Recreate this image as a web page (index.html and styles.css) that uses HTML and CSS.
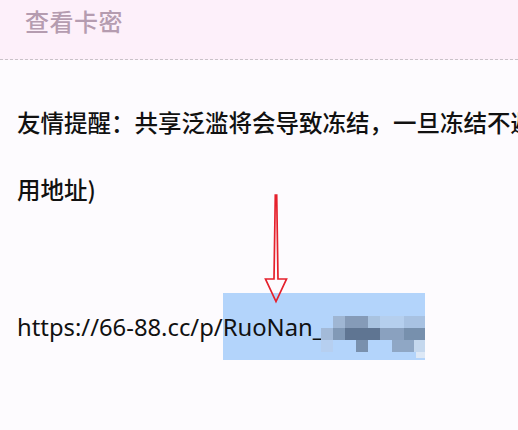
FILE: index.html
```html
<!DOCTYPE html>
<html lang="zh">
<head>
<meta charset="utf-8">
<link rel="stylesheet" href="styles.css">
</head>
<body>
<div class="page">
  <header class="header">
    <h1 class="title">查看卡密</h1>
  </header>
  <main class="content">
    <p class="notice">友情提醒：共享泛滥将会导致冻结，一旦冻结不避免</p>
    <p class="notice notice-end">用地址)</p>
    <div class="pointer">
      <svg class="arrow" width="30" height="112" viewBox="0 0 30 112">
        <path d="M14.3 2 L15.7 2 L17 86 L25.5 86 L15 108.5 L4.5 86 L13 86 Z" fill="none" stroke="#e5202c" stroke-width="1.7" stroke-linejoin="miter"/>
      </svg>
    </div>
    <div class="link-row">
      <span class="url">https://66-88.cc/p/</span><span class="selected"><span class="url">RuoNan_</span><svg class="blur" width="112" height="50" viewBox="-10 0 112 50">
        <rect x="6" y="8" width="12" height="12" fill="#9fb6d3"/>
        <rect x="18" y="8" width="23" height="12" fill="#859bb8"/>
        <rect x="41" y="8" width="12" height="12" fill="#a9c3e0"/>
        <rect x="53" y="8" width="24" height="12" fill="#b5cfee"/>
        <rect x="77" y="8" width="22" height="12" fill="#a8c2e2"/>
        <rect x="-6" y="20" width="12" height="12" fill="#a3bad8"/>
        <rect x="6" y="20" width="12" height="12" fill="#8199b6"/>
        <rect x="18" y="20" width="35" height="12" fill="#5f7592"/>
        <rect x="53" y="20" width="24" height="12" fill="#8aa1bf"/>
        <rect x="77" y="20" width="22" height="12" fill="#7790ad"/>
        <rect x="-6" y="32" width="12" height="12" fill="#b6cff0"/>
        <rect x="29" y="32" width="12" height="12" fill="#7990ad"/>
        <rect x="65" y="32" width="22" height="12" fill="#8fa7c5"/>
        <rect x="87" y="32" width="12" height="12" fill="#c5d8ee"/>
        <rect x="89" y="44" width="12" height="6" fill="#dde8f6"/>
      </svg></span>
    </div>
  </main>
</div>
</body>
</html>
```

FILE: styles.css
```css
html, body {
  margin: 0;
  padding: 0;
}
body {
  width: 518px;
  height: 430px;
  overflow: hidden;
  background: #fdfbfe;
  font-family: "Noto Sans CJK SC", "Noto Sans", sans-serif;
}
.page {
  display: flex;
  flex-direction: column;
}
.header {
  height: 60px;
  background: #fdf0fa;
  border-bottom: 1px dashed #c9c2c8;
  display: flex;
  align-items: center;
  padding-left: 25px;
  box-sizing: border-box;
}
.title {
  margin: 0;
  margin-top: -18px;
  font-size: 24px;
  font-weight: 500;
  color: #b59cb0;
  letter-spacing: 0.5px;
}
.content {
  padding-left: 17px;
  display: flex;
  flex-direction: column;
}
.notice {
  margin: 0;
  font-size: 23.5px;
  font-weight: 500;
  color: #111;
  white-space: nowrap;
  overflow: hidden;
  line-height: 32px;
}
.notice:first-child {
  margin-top: 46px;
}
.notice-end {
  margin-top: 35px;
}
.pointer {
  height: 88px;
  position: relative;
}
.arrow {
  position: absolute;
  left: 244px;
  top: -12px;
}
.link-row {
  display: flex;
  align-items: center;
  height: 67px;
}
.url {
  font-family: "Noto Sans", sans-serif;
  font-size: 23.8px;
  color: #111;
}
.selected {
  display: flex;
  align-items: center;
  height: 67px;
  width: 202px;
  background: #b3d4fb;
  overflow: hidden;
}
.blur {
  flex: none;
  margin-top: 12px;
  margin-left: -6px;
}
```
